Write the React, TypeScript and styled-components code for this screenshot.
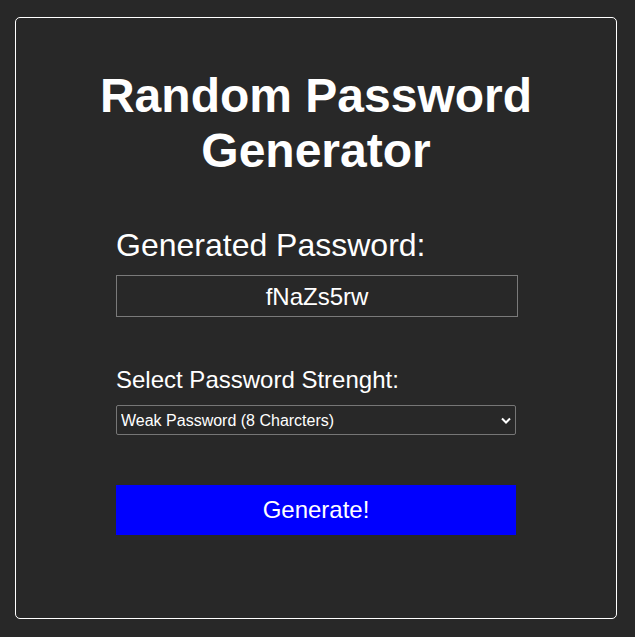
import React, { useState } from "react";
import styled, { createGlobalStyle } from "styled-components";

const GlobalStyle = createGlobalStyle`
  html, body {
    margin: 0;
    padding: 0;
    background: #282828;
  }
  body {
    font-family: "Liberation Sans", Arial, sans-serif;
    color: #ffffff;
  }
`;

const Page = styled.div`
  padding: 17px 18px 18px 15px;
  box-sizing: border-box;
  width: 635px;
  min-height: 637px;
`;

const Card = styled.div`
  box-sizing: border-box;
  width: 602px;
  height: 602px;
  border: 1px solid #ffffff;
  border-radius: 5px;
  display: flex;
  flex-direction: column;
  align-items: center;
`;

const Title = styled.h1`
  margin: 50px 0 0;
  width: 520px;
  font-size: 48px;
  line-height: normal;
  font-weight: 700;
  text-align: center;
  color: #ffffff;
`;

const Form = styled.div`
  width: 400px;
  margin-top: 49px;
  display: flex;
  flex-direction: column;
`;

const Label = styled.label<{ $size: number }>`
  font-size: ${(p) => p.$size}px;
  line-height: normal;
  color: #ffffff;
`;

const PasswordBox = styled.input`
  box-sizing: border-box;
  width: 402px;
  height: 42px;
  margin: 11px 0 49px;
  border: 1px solid #7a7a7a;
  border-radius: 0;
  background: transparent;
  color: #ffffff;
  font-family: "Liberation Sans", Arial, sans-serif;
  font-size: 24px;
  text-align: center;
  padding: 2px 0 0;
  outline: none;
`;

const SelectWrap = styled.div`
  position: relative;
  width: 400px;
  margin-top: 11px;
`;

const Select = styled.select`
  box-sizing: border-box;
  width: 400px;
  height: 30px;
  border: 1px solid #767676;
  border-radius: 2px;
  background: #282828;
  color: #ffffff;
  font-family: "Liberation Sans", Arial, sans-serif;
  font-size: 16px;
  padding: 0 0 0 4px;
  appearance: none;
  -webkit-appearance: none;
  outline: none;
`;

const Chevron = styled.svg`
  position: absolute;
  right: 5px;
  top: 12px;
  width: 10px;
  height: 7px;
  pointer-events: none;
`;

const GenerateButton = styled.button`
  box-sizing: border-box;
  width: 400px;
  height: 50px;
  margin-top: 50px;
  border: none;
  border-radius: 0;
  background: #0000ff;
  color: #ffffff;
  font-family: "Liberation Sans", Arial, sans-serif;
  font-size: 24px;
  cursor: pointer;
`;

function randomPassword(len: number) {
  const chars = "abcdefghijklmnopqrstuvwxyzABCDEFGHIJKLMNOPQRSTUVWXYZ0123456789";
  let out = "";
  for (let i = 0; i < len; i++) out += chars[Math.floor(Math.random() * chars.length)];
  return out;
}

export default function App() {
  const [password, setPassword] = useState("fNaZs5rw");
  const [length, setLength] = useState(8);

  return (
    <>
      <GlobalStyle />
      <Page>
        <Card>
          <Title>Random Password Generator</Title>
          <Form>
            <Label $size={32} htmlFor="pw">Generated Password:</Label>
            <PasswordBox id="pw" readOnly value={password} />
            <Label $size={24} htmlFor="strength">Select Password Strenght:</Label>
            <SelectWrap>
              <Select
                id="strength"
                value={length}
                onChange={(e) => setLength(Number(e.target.value))}
              >
                <option value={8}>Weak Password (8 Charcters)</option>
                <option value={12}>Medium Password (12 Charcters)</option>
                <option value={16}>Strong Password (16 Charcters)</option>
              </Select>
              <Chevron viewBox="0 0 10 7">
                <path d="M1 1.5 L5 5.5 L9 1.5" fill="none" stroke="#ffffff" strokeWidth="2" />
              </Chevron>
            </SelectWrap>
            <GenerateButton onClick={() => setPassword(randomPassword(length))}>
              Generate!
            </GenerateButton>
          </Form>
        </Card>
      </Page>
    </>
  );
}
